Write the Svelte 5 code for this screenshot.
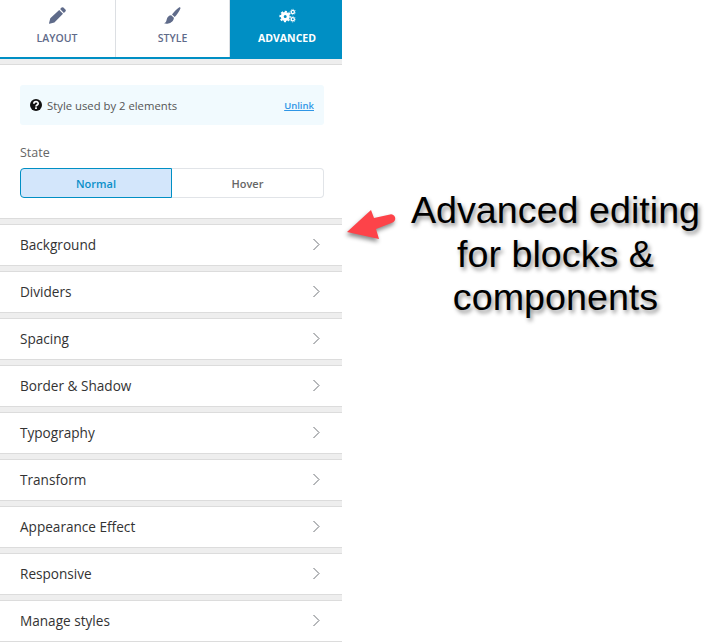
<script>
  // Advanced tab of the block settings panel, with a callout next to it
  const sections = [
    'Background',
    'Dividers',
    'Spacing',
    'Border & Shadow',
    'Typography',
    'Transform',
    'Appearance Effect',
    'Responsive',
    'Manage styles'
  ]

  let activeState = $state('Normal')
</script>

<div class="page">
  <section class="panel">
    <div class="tabs">
      <div class="tab">
        <svg width="17" height="17" viewBox="0 0 17 17">
          <path fill="#5f6b8a" d="M12.600.6a1.300 1.300 0 0 1 1.800 0l2 2a1.300 1.300 0 0 1 0 1.800l-1.500 1.500-3.800-3.800zM10.200 3l3.800 3.800-8.600 8.600-4.900 1.300a.4.4 0 0 1-.5-.5l1.300-4.900z"/>
        </svg>
        <span>LAYOUT</span>
      </div>
      <div class="tab">
        <svg width="17" height="17" viewBox="0 0 17 17">
          <path fill="#5f6b8a" d="M15 .4c.8-.6 1.800.3 1.400 1.200-1.100 2.600-3.600 6.600-5.700 8.300L8 7.400C9.700 5 12.500 2.200 15 .4zM7.200 8.300l2.700 2.400c-.2 3.300-3 5.300-5.600 5.800-1.500.3-3.200.2-4.300-.3 1.800-.5 2.200-1.700 2.700-3.800.5-2.400 2.300-4 4.500-4.100z"/>
        </svg>
        <span>STYLE</span>
      </div>
      <div class="tab active">
        <svg width="17" height="17" viewBox="0 0 17 17">
          <g fill="none" stroke="#fff">
            <circle cx="6.200" cy="9.500" r="3" stroke-width="3"/>
            <circle cx="6.200" cy="9.500" r="5" stroke-width="1.600" stroke-dasharray="2.200 1.730" stroke-dashoffset="1.100"/>
            <circle cx="13.800" cy="5" r="1.600" stroke-width="1.300"/>
            <circle cx="13.800" cy="5" r="2.700" stroke-width=".8" stroke-dasharray="1 1.120" stroke-dashoffset=".5"/>
            <circle cx="13.800" cy="12.300" r="1.600" stroke-width="1.300"/>
            <circle cx="13.800" cy="12.300" r="2.700" stroke-width=".8" stroke-dasharray="1 1.120" stroke-dashoffset=".5"/>
          </g>
        </svg>
        <span>ADVANCED</span>
      </div>
    </div>
    <div class="band top"></div>

    <div class="notice">
      <svg class="help" width="12" height="12" viewBox="0 0 12 12">
        <circle cx="6" cy="6" r="6" fill="#111"/>
        <path fill="none" stroke="#fff" stroke-width="1.700" d="M3.900 4.700c0-2.700 4.300-2.600 4.300-.2 0 1.500-2.200 1.500-2.200 3"/>
        <rect x="5.100" y="8.300" width="1.800" height="1.700" fill="#fff"/>
      </svg>
      <span class="notice-text">Style used by 2 elements</span>
      <a href="#unlink" class="unlink">Unlink</a>
    </div>

    <div class="state">
      <div class="state-label">State</div>
      <div class="toggle">
        {#each ['Normal', 'Hover'] as name (name)}
          <button class:on={activeState === name} onclick={() => (activeState = name)}>{name}</button>
        {/each}
      </div>
    </div>

    {#each sections as name (name)}
      <div class="row">
        <span>{name}</span>
        <svg width="9" height="13" viewBox="0 0 9 13">
          <path fill="none" stroke="#6f7378" stroke-width="1" d="M1.500 1l5.500 5.500-5.500 5.500"/>
        </svg>
      </div>
    {/each}
  </section>

  <aside class="callout">
    <svg class="arrow" width="56" height="36" viewBox="0 0 56 36">
      <path fill="#fd4349" d="M5 27L29 5l3 8 16-3.500a4.200 4.200 0 0 1 2 8.200L34 24l3 10z"/>
    </svg>
    <p>Advanced editing<br />for blocks &amp;<br />components</p>
  </aside>
</div>

<style>
  :global(body) {
    background: #fff;
  }
  .page {
    display: flex;
    width: 720px;
    height: 642px;
    overflow: hidden;
    font-family: 'Open Sans', sans-serif;
  }
  .panel {
    flex: none;
    width: 342px;
  }
  .tabs {
    display: flex;
    height: 59px;
    box-sizing: border-box;
    border-bottom: 2px solid #008fc4;
  }
  .tab {
    flex: none;
    box-sizing: border-box;
    width: 114px;
    display: flex;
    flex-direction: column;
    align-items: center;
    padding-top: 7px;
    gap: 7px;
    border-right: 1px solid #dcdfe3;
    color: #5f6b8a;
    font-size: 10.500px;
    font-weight: 600;
  }
  .tab:first-child {
    width: 116px;
    padding-right: 1px;
  }
  .tab.active {
    width: 112px;
    padding-left: 2px;
    border-right: none;
    background: #008fc4;
    color: #fff;
    font-weight: 700;
    margin-bottom: -2px;
  }
  .tab svg {
    height: 17px;
  }
  .band {
    background: #eeeeee;
    border-bottom: 1px solid #dcdcdc;
  }
  .band.top {
    height: 5px;
  }
  .notice {
    display: flex;
    align-items: center;
    height: 40px;
    margin: 20px 18px 0 20px;
    padding: 0 10px;
    border-radius: 3px;
    background: #f1fafe;
    font-size: 11.300px;
    color: #555;
  }
  .help {
    margin-right: 5px;
  }
  .notice-text {
    flex: 1;
  }
  .unlink {
    font-size: 9.500px;
    font-weight: 600;
    color: #2f96e6;
  }
  .state {
    margin: 0 18px 26px 20px;
    padding-top: 19px;
  }
  .state-label {
    font-size: 12.500px;
    line-height: 17px;
    color: #666;
    margin-bottom: 7px;
  }
  .toggle {
    display: flex;
    height: 30px;
  }
  .toggle button {
    flex: 1;
    padding: 0;
    border: 1px solid #e1e4e8;
    border-left: none;
    border-radius: 0 4px 4px 0;
    background: #fff;
    color: #666;
    font: 600 11px 'Open Sans', sans-serif;
  }
  .toggle button.on {
    flex: none;
    width: 152px;
    border: 1px solid #008fc4;
    border-radius: 4px 0 0 4px;
    background: #d3e6fb;
    color: #0a8fc9;
  }
  .row {
    display: flex;
    align-items: center;
    justify-content: space-between;
    height: 38px;
    padding: 0 21px 2px 20px;
    border-top: 1px solid #dcdcdc;
    border-bottom: 1px solid #dcdcdc;
    box-shadow: 0 -5px 0 #eeeeee, 0 -6px 0 #dcdcdc;
    margin-top: 5px;
    font-size: 13.600px;
    color: #333;
  }
  .callout {
    position: relative;
    flex: 1;
  }
  .arrow {
    position: absolute;
    left: 0;
    top: 205px;
    filter: drop-shadow(-1px 3px 2px rgba(0, 0, 0, 0.45));
  }
  .callout p {
    margin: 189px 0 0 63.500px;
    width: 300px;
    text-align: center;
    font: 37.700px/43.600px 'Liberation Sans', sans-serif;
    color: #000;
    text-shadow: 2px 3px 4px rgba(0, 0, 0, 0.45);
  }
</style>
